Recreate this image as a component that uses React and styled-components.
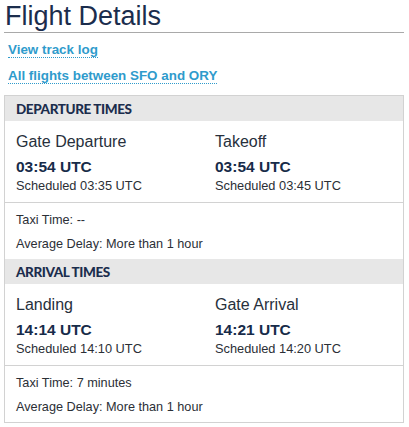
import React from 'react';
import styled, { createGlobalStyle } from 'styled-components';

const GlobalStyle = createGlobalStyle`
  body {
    margin: 0;
    padding: 0;
    background: #fff;
    font-family: 'Liberation Sans', Arial, sans-serif;
    color: #2b2f36;
  }
`;

const Page = styled.div`
  width: 400px;
  padding: 0 4px;
`;

const Title = styled.h1`
  margin: 0;
  font-size: 27px;
  font-weight: normal;
  line-height: 32px;
  color: #1b2d4d;
  padding-left: 1px;
  border-bottom: 1px solid #a9a9a9;
`;

const Links = styled.div`
  display: flex;
  flex-direction: column;
  gap: 7px;
  padding: 7px 0 0 4px;
  margin-bottom: 10px;
`;

const LinkRow = styled.div`
  line-height: 18px;
`;

const TrackLink = styled.a`
  font-size: 13.4px;
  font-weight: bold;
  color: #2f9bcc;
  text-decoration: none;
  border-bottom: 1px dotted #2f9bcc;
`;

const Box = styled.div`
  border: 1px solid #d2d2d2;
`;

const SectionHeader = styled.div`
  background: #e7e7e7;
  height: 25px;
  line-height: 26px;
  padding-left: 11px;
  font-family: Lato, 'Liberation Sans', sans-serif;
  font-weight: 900;
  font-size: 13.5px;
  letter-spacing: -0.4px;
  color: #1b2d4d;
`;

const Times = styled.div`
  display: grid;
  grid-template-columns: 1fr 1fr;
  padding: 11px 0 7px;
  border-bottom: 1px solid #d2d2d2;
`;

const TimeCell = styled.div`
  padding-left: 11px;
  display: flex;
  flex-direction: column;
`;

const Label = styled.div`
  font-size: 16px;
  line-height: 20px;
  color: #27303c;
`;

const Actual = styled.div`
  font-size: 15.5px;
  font-weight: bold;
  line-height: 20px;
  margin-top: 5px;
  color: #172b49;
`;

const Scheduled = styled.div`
  font-size: 12.8px;
  line-height: 18px;
  color: #2b2f36;
`;

const Notes = styled.div`
  display: flex;
  flex-direction: column;
  gap: 6px;
  padding: 8px 0 6px 11px;
`;

const Note = styled.div`
  font-size: 12.7px;
  line-height: 18px;
  color: #2b2f36;
`;

const sections = [
  {
    title: 'DEPARTURE TIMES',
    times: [
      { label: 'Gate Departure', actual: '03:54 UTC', scheduled: 'Scheduled 03:35 UTC' },
      { label: 'Takeoff', actual: '03:54 UTC', scheduled: 'Scheduled 03:45 UTC' },
    ],
    notes: ['Taxi Time: --', 'Average Delay: More than 1 hour'],
  },
  {
    title: 'ARRIVAL TIMES',
    times: [
      { label: 'Landing', actual: '14:14 UTC', scheduled: 'Scheduled 14:10 UTC' },
      { label: 'Gate Arrival', actual: '14:21 UTC', scheduled: 'Scheduled 14:20 UTC' },
    ],
    notes: ['Taxi Time: 7 minutes', 'Average Delay: More than 1 hour'],
  },
];

export default function App() {
  return (
    <Page>
      <GlobalStyle />
      <Title>Flight Details</Title>
      <Links>
        <LinkRow><TrackLink href="#">View track log</TrackLink></LinkRow>
        <LinkRow><TrackLink href="#">All flights between SFO and ORY</TrackLink></LinkRow>
      </Links>
      <Box>
        {sections.map((s) => (
          <div key={s.title}>
            <SectionHeader>{s.title}</SectionHeader>
            <Times>
              {s.times.map((t) => (
                <TimeCell key={t.label}>
                  <Label>{t.label}</Label>
                  <Actual>{t.actual}</Actual>
                  <Scheduled>{t.scheduled}</Scheduled>
                </TimeCell>
              ))}
            </Times>
            <Notes>
              {s.notes.map((n) => (
                <Note key={n}>{n}</Note>
              ))}
            </Notes>
          </div>
        ))}
      </Box>
    </Page>
  );
}
